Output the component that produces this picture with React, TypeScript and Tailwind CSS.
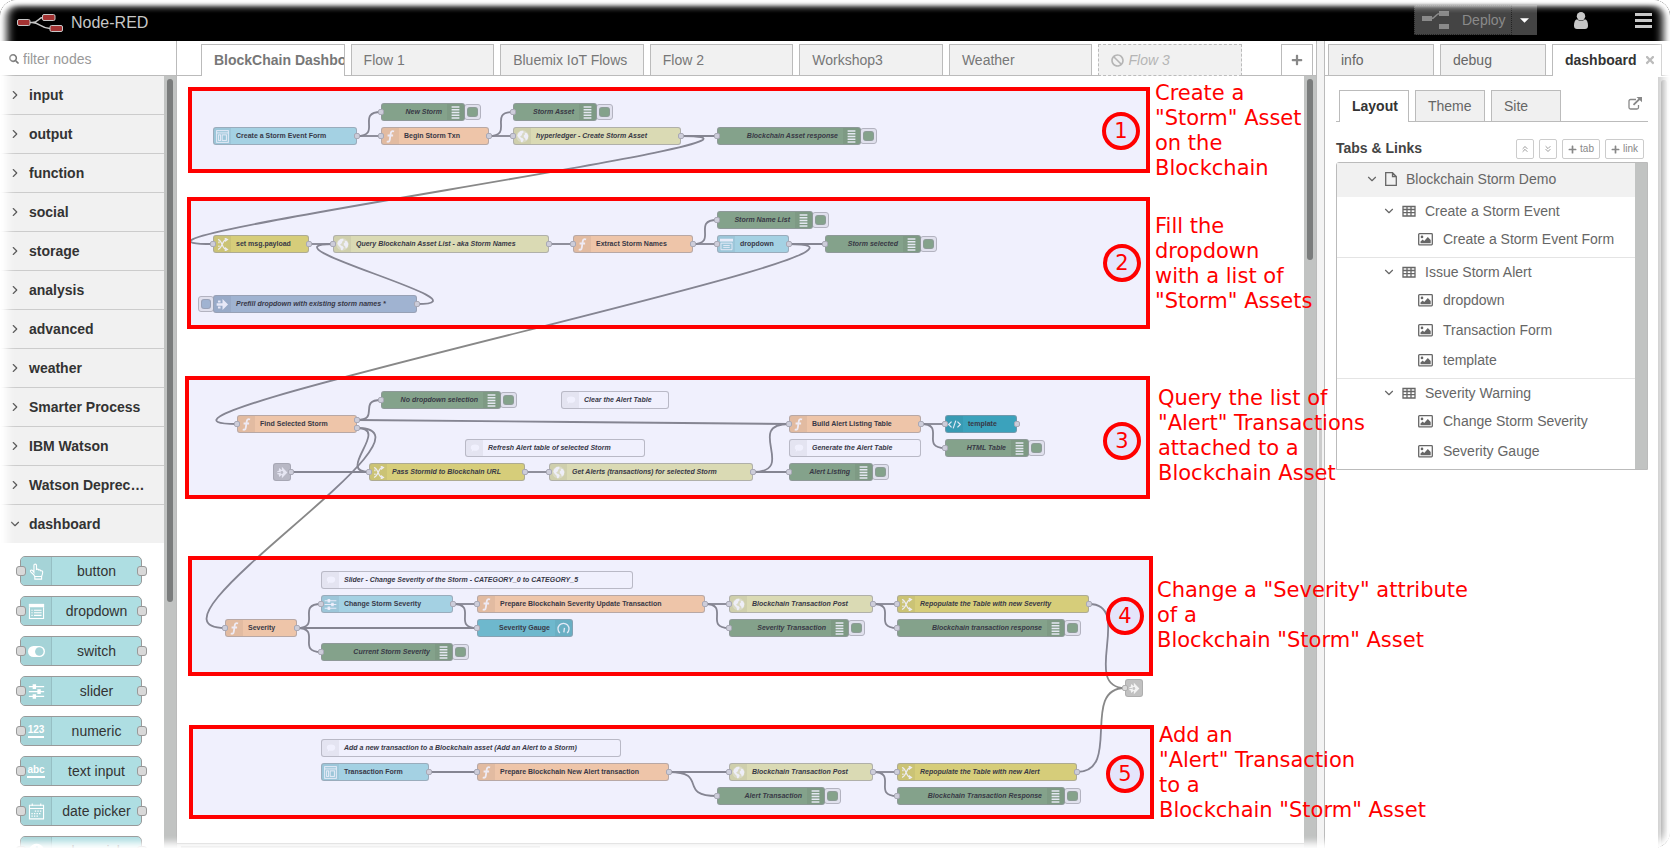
import React from "react";
import { FaBan, FaPlus, FaSearch, FaTimes } from "react-icons/fa";
import { ChevronDown, ChevronRight, ChevronsDown, ChevronsUp } from "lucide-react";

type IconName =
  | "form" | "function" | "globe" | "change" | "dropdown" | "inject" | "link" | "comment"
  | "debug" | "code" | "slider" | "gauge" | "hand" | "list" | "switch" | "numeric" | "text" | "date" | "palette";

function Glyph({ name, className }: { name: IconName; className: string }) {
  const s = { fill: "none", stroke: "currentColor", strokeWidth: 1.6 } as const;
  return (
    <svg viewBox="0 0 20 20" className={className} fill="currentColor" aria-hidden="true">
      {name === "form" && (
        <g {...s} strokeWidth={1.5}>
          <rect x="1" y="1" width="18" height="18" />
          <path d="M1 4.500h18" />
          <rect x="4" y="7.500" width="3" height="8.500" />
          <rect x="9.500" y="7.500" width="6.500" height="8.500" />
        </g>
      )}
      {name === "function" && (
        <path {...s} strokeWidth={2.8} d="M15.500 2.300c-3.200-1.300-4.800.2-5.200 3.200l-1.300 9c-.4 3.200-1.800 4.200-4.800 3.200M5.500 8.500h8.500" />
      )}
      {name === "globe" && (
        <g>
          <circle cx="10" cy="10" r="9.500" opacity=".35" />
          <path d="M3 5.500 7 1.500l4-.5 1 2.500-2 1.500-1 3-2.500 1.500 1 2 3 1 1.500 2.500-2 3.500-2 .5-1-4-3-3L2 9zM13 4l4 1 2 4-1 5-3 2-1-3.500-2-1.500v-3l2-1.500z" />
        </g>
      )}
      {name === "change" && (
        <g {...s} strokeWidth={2}>
          <path d="M3 2.500c6 0 7 15 12.500 15M3 17.500c6 0 7-15 12.500-15" />
          <path d="m13.500 0 4 2.500-4 2.700M13.500 14.800l4 2.700-4 2.500" />
          <path d="M4.500 5.500v2.500M4.500 11.500v2.500" />
        </g>
      )}
      {name === "dropdown" && (
        <g>
          <path d="M0 1h20v4.500H0z" />
          <g {...s} strokeWidth={1.4}>
            <path d="M1.500 8h17v10h-17zM5 11.500h10M5 14.500h10" />
          </g>
        </g>
      )}
      {name === "inject" && <path d="M3 4h4v3H3zM1 8h9V1.500L18.500 10 10 18.500V12H1zM3 13h4v3H3z" />}
      {name === "link" && (
        <g>
          <path d="M9 1l8.500 9L9 19V13.500L5 17l-1-4.500H2v-5h2L5 3l4 3.500z" opacity=".9" />
          <circle cx="9" cy="10" r="2.200" fill="#c5c5c5" />
          <path d="M0 9.300h6v1.400H0z" fill="#c5c5c5" />
        </g>
      )}
      {name === "comment" && (
        <path d="M10 3c5 0 8.500 2.500 8.500 6.300S15 15.500 10 15.500c-1 0-2-.1-3-.4L3 18l1.200-4C2.800 12.700 1.500 11 1.500 9.300 1.500 5.500 5 3 10 3z" />
      )}
      {name === "debug" && (
        <path d="M4 .5h12v2.200H4zM4 4.700h12v2.200H4zM4 8.900h12v2.200H4zM4 13.100h12v2.200H4zM4 17.300h12v2.200H4z" />
      )}
      {name === "code" && <path {...s} strokeWidth={1.8} d="M5.500 5.500 1 10l4.500 4.500M14.500 5.500 19 10l-4.500 4.500M12 4 8 16" />}
      {name === "slider" && (
        <g>
          <path d="M1 3.500h18v1.500H1zM1 9.300h18v1.500H1zM1 15.100h18v1.500H1z" />
          <path d="M5.500 1.500h4v5.500h-4zM11 7.300h4v5.500h-4zM5.500 13.100h4v5.500h-4z" />
        </g>
      )}
      {name === "gauge" && (
        <g {...s} strokeWidth={2}>
          <path d="M4.500 17a8.500 8.500 0 1 1 11 0" />
          <path d="M10.500 16l1-7" />
        </g>
      )}
      {name === "hand" && (
        <g {...s} strokeWidth={1.3}>
          <path d="M7 11V2.800c0-2 3-2 3 0V7.500c2-.8 2.600.2 2.700.8 1.500-.5 2.200.2 2.300.9 1.500-.4 2.300.5 2.300 1.500 0 2-.6 3.600-1.300 5.100H8C6.500 12.500 4 11.800 3 10.300c-.8-1.500 1-2.500 2.300-1.600z" />
          <path d="M8 15.800v3.200h8v-3.200" />
        </g>
      )}
      {name === "list" && (
        <g>
          <path d="M1 1h18v4H1z" />
          <path {...s} strokeWidth={1.3} d="M1.700 5v13.300h16.600V5M7 8.500h9M7 11.500h9M7 14.500h9M4 8.500h1.500M4 11.500h1.500M4 14.500h1.500" />
        </g>
      )}
      {name === "switch" && (
        <g>
          <rect x="0" y="3.500" width="20" height="13" rx="6.500" />
          <circle cx="13.300" cy="10" r="5" fill="#a5d3d7" />
        </g>
      )}
      {name === "date" && (
        <g>
          <path {...s} strokeWidth={1.3} d="M1.700 2.700h16.600v16H1.700zM1.700 6.500h16.600M5 .5v3M15 .5v3" />
          <path {...s} strokeWidth={1.6} strokeDasharray="1.600 1.400" d="M8 9.500h8M4 12.500h12M4 15.500h9" />
        </g>
      )}
      {name === "palette" && (
        <g>
          <path d="M10 1c5 0 9 3.500 9 8 0 3-2 4.500-4.500 4.500H12c-1.500 0-1.500 1.500-1 2.500.7 1.500 0 3-1.500 3C4.500 19 1 15 1 10s4-9 9-9z" />
          <circle cx="6" cy="7" r="1.500" fill="#a5d3d7" />
          <circle cx="10.500" cy="5" r="1.500" fill="#a5d3d7" />
          <circle cx="14.500" cy="8" r="1.500" fill="#a5d3d7" />
          <circle cx="5" cy="12" r="1.500" fill="#a5d3d7" />
        </g>
      )}
    </svg>
  );
}

const CATEGORIES = [
  "input", "output", "function", "social", "storage", "analysis",
  "advanced", "weather", "Smarter Process", "IBM Watson", "Watson Deprec…",
];

const PALETTE: { label: string; icon: IconName }[] = [
  { label: "button", icon: "hand" },
  { label: "dropdown", icon: "list" },
  { label: "switch", icon: "switch" },
  { label: "slider", icon: "slider" },
  { label: "numeric", icon: "numeric" },
  { label: "text input", icon: "text" },
  { label: "date picker", icon: "date" },
  { label: "colour picker", icon: "palette" },
];

const KINDS = {
  ui: "bg-[#abdde3]",
  function: "bg-[#fdd0a2]",
  http: "bg-[#e7e7ae]",
  change: "bg-[#e2d96e]",
  debug: "bg-[#87a980]",
  inject: "bg-[#a6bbcf]",
  template: "bg-[#36a9b7]",
  gauge: "bg-[#6fc1ca]",
  comment: "bg-white",
  link: "bg-[#cccccc]",
};

type FlowNode = {
  id: string;
  kind: keyof typeof KINDS;
  icon: IconName;
  label: string;
  x: number;
  y: number;
  w: number;
  italic?: boolean;
  input?: boolean;
  outputs?: number;
};

/* x is the left edge and y the vertical centre of a node, on a 12px grid */
const NODES: FlowNode[] = [
  { id: "form1", kind: "ui", icon: "form", label: "Create a Storm Event Form", x: 36, y: 60, w: 144, outputs: 1 },
  { id: "newStorm", kind: "debug", icon: "debug", label: "New Storm", x: 204, y: 36, w: 84, input: true },
  { id: "begin", kind: "function", icon: "function", label: "Begin Storm Txn", x: 204, y: 60, w: 108, input: true, outputs: 1 },
  { id: "stormAsset", kind: "debug", icon: "debug", label: "Storm Asset", x: 336, y: 36, w: 84, input: true },
  { id: "hyper", kind: "http", icon: "globe", label: "hyperledger - Create Storm Asset", x: 336, y: 60, w: 168, italic: true, input: true, outputs: 1 },
  { id: "assetResp", kind: "debug", icon: "debug", label: "Blockchain Asset response", x: 540, y: 60, w: 144, input: true },
  { id: "setMsg", kind: "change", icon: "change", label: "set msg.payload", x: 36, y: 168, w: 96, input: true, outputs: 1 },
  { id: "query", kind: "http", icon: "globe", label: "Query Blockchain Asset List - aka Storm Names", x: 156, y: 168, w: 216, italic: true, input: true, outputs: 1 },
  { id: "extract", kind: "function", icon: "function", label: "Extract Storm Names", x: 396, y: 168, w: 120, input: true, outputs: 1 },
  { id: "dropdown", kind: "ui", icon: "dropdown", label: "dropdown", x: 540, y: 168, w: 72, input: true, outputs: 1 },
  { id: "nameList", kind: "debug", icon: "debug", label: "Storm Name List", x: 540, y: 144, w: 96, input: true },
  { id: "selected", kind: "debug", icon: "debug", label: "Storm selected", x: 648, y: 168, w: 96, input: true },
  { id: "prefill", kind: "inject", icon: "inject", label: "Prefill dropdown with existing storm names *", x: 36, y: 228, w: 204, italic: true, outputs: 1 },
  { id: "find", kind: "function", icon: "function", label: "Find Selected Storm", x: 60, y: 348, w: 120, input: true, outputs: 2 },
  { id: "noDrop", kind: "debug", icon: "debug", label: "No dropdown selection", x: 204, y: 324, w: 120, input: true },
  { id: "c1", kind: "comment", icon: "comment", label: "Clear the Alert Table", x: 384, y: 324, w: 108, italic: true },
  { id: "c2", kind: "comment", icon: "comment", label: "Refresh Alert table of selected Storm", x: 288, y: 372, w: 180, italic: true },
  { id: "linkIn", kind: "link", icon: "link", label: "", x: 96, y: 396, w: 18, outputs: 1 },
  { id: "pass", kind: "change", icon: "change", label: "Pass StormId to Blockchain URL", x: 192, y: 396, w: 156, italic: true, input: true, outputs: 1 },
  { id: "getAlerts", kind: "http", icon: "globe", label: "Get Alerts (transactions) for selected Storm", x: 372, y: 396, w: 204, italic: true, input: true, outputs: 1 },
  { id: "build", kind: "function", icon: "function", label: "Build Alert Listing Table", x: 612, y: 348, w: 132, input: true, outputs: 1 },
  { id: "c3", kind: "comment", icon: "comment", label: "Generate the Alert Table", x: 612, y: 372, w: 132, italic: true },
  { id: "listing", kind: "debug", icon: "debug", label: "Alert Listing", x: 612, y: 396, w: 84, input: true },
  { id: "template", kind: "template", icon: "code", label: "template", x: 768, y: 348, w: 72, input: true, outputs: 1 },
  { id: "html", kind: "debug", icon: "debug", label: "HTML Table", x: 768, y: 372, w: 84, input: true },
  { id: "severity", kind: "function", icon: "function", label: "Severity", x: 48, y: 552, w: 72, input: true, outputs: 1 },
  { id: "c4", kind: "comment", icon: "comment", label: "Slider - Change Severity of the Storm - CATEGORY_0 to CATEGORY_5", x: 144, y: 504, w: 312, italic: true },
  { id: "changeSev", kind: "ui", icon: "slider", label: "Change Storm Severity", x: 144, y: 528, w: 132, input: true, outputs: 1 },
  { id: "curSev", kind: "debug", icon: "debug", label: "Current Storm Severity", x: 144, y: 576, w: 132, input: true },
  { id: "prepSev", kind: "function", icon: "function", label: "Prepare Blockchain Severity Update Transaction", x: 300, y: 528, w: 228, input: true, outputs: 1 },
  { id: "gauge", kind: "gauge", icon: "gauge", label: "Severity Gauge", x: 300, y: 552, w: 96, input: true },
  { id: "post1", kind: "http", icon: "globe", label: "Blockchain Transaction Post", x: 552, y: 528, w: 144, italic: true, input: true, outputs: 1 },
  { id: "sevTx", kind: "debug", icon: "debug", label: "Severity Transaction", x: 552, y: 552, w: 120, input: true },
  { id: "repop1", kind: "change", icon: "change", label: "Repopulate the Table with new Severity", x: 720, y: 528, w: 192, italic: true, input: true, outputs: 1 },
  { id: "txResp1", kind: "debug", icon: "debug", label: "Blockchain transaction response", x: 720, y: 552, w: 168, input: true },
  { id: "linkOut", kind: "link", icon: "link", label: "", x: 948, y: 612, w: 18, input: true },
  { id: "c5", kind: "comment", icon: "comment", label: "Add a new transaction to a Blockchain asset (Add an Alert to a Storm)", x: 144, y: 672, w: 300, italic: true },
  { id: "form2", kind: "ui", icon: "form", label: "Transaction Form", x: 144, y: 696, w: 108, outputs: 1 },
  { id: "prepAlert", kind: "function", icon: "function", label: "Prepare Blockchain New Alert transaction", x: 300, y: 696, w: 192, input: true, outputs: 1 },
  { id: "post2", kind: "http", icon: "globe", label: "Blockchain Transaction Post", x: 552, y: 696, w: 144, italic: true, input: true, outputs: 1 },
  { id: "alertTx", kind: "debug", icon: "debug", label: "Alert Transaction", x: 540, y: 720, w: 108, input: true },
  { id: "repop2", kind: "change", icon: "change", label: "Repopulate the Table with new Alert", x: 720, y: 696, w: 180, italic: true, input: true, outputs: 1 },
  { id: "txResp2", kind: "debug", icon: "debug", label: "Blockchain Transaction Response", x: 720, y: 720, w: 168, input: true },
];

const LINKS: [string, string, number?][] = [
  ["form1", "newStorm"], ["form1", "begin"], ["begin", "stormAsset"], ["begin", "hyper"],
  ["hyper", "assetResp"], ["hyper", "setMsg"], ["setMsg", "query"], ["prefill", "query"],
  ["query", "extract"], ["extract", "nameList"], ["extract", "dropdown"], ["dropdown", "selected"],
  ["dropdown", "find"], ["find", "noDrop"], ["find", "build"], ["find", "pass", 1],
  ["find", "severity", 1], ["linkIn", "pass"], ["pass", "getAlerts"], ["getAlerts", "build"],
  ["getAlerts", "listing"], ["build", "template"], ["build", "html"], ["severity", "changeSev"],
  ["severity", "gauge"], ["severity", "curSev"], ["changeSev", "prepSev"], ["changeSev", "gauge"],
  ["prepSev", "post1"], ["prepSev", "sevTx"], ["post1", "repop1"], ["post1", "txResp1"],
  ["repop1", "linkOut"], ["form2", "prepAlert"], ["prepAlert", "post2"], ["prepAlert", "alertTx"],
  ["post2", "repop2"], ["post2", "txResp2"], ["repop2", "linkOut"],
];

function portOffset(outputs: number, index: number) {
  return outputs === 1 ? 0 : index * 8 - 4;
}

function wirePath([from, to, port = 0]: [string, string, number?]) {
  const a = NODES.find((n) => n.id === from)!;
  const b = NODES.find((n) => n.id === to)!;
  const x1 = a.x + a.w;
  const y1 = a.y + portOffset(a.outputs ?? 1, port);
  const x2 = b.x;
  const y2 = b.y;
  const dx = x2 - x1;
  const dy = y2 - y1;
  const unit = 60;
  const high = 18;
  const delta = Math.hypot(dx, dy);
  let scale = delta < unit ? 0.75 - 0.75 * ((unit - delta) / unit) : 0.75;
  let scaleY = 0;
  if (dx < 0) {
    scale += 2 * (Math.min(5 * unit, Math.abs(dx)) / (5 * unit));
    if (Math.abs(dy) < 3 * high) {
      scaleY = (dy > 0 ? 0.5 : -0.5) * ((3 * high - Math.abs(dy)) / (3 * high)) * (Math.min(unit, Math.abs(dx)) / unit);
    }
  }
  return `M${x1} ${y1}C${x1 + scale * unit} ${y1 + scaleY * high} ${x2 - scale * unit} ${y2 - scaleY * high} ${x2} ${y2}`;
}

function Port({ x, y }: { x: number; y: number }) {
  return (
    <span
      className="absolute size-[6px] rounded-[2px] border border-[#b0b0b0] bg-[#d9d9d9]"
      style={{ left: x - 3, top: y - 3 }}
    />
  );
}

function CanvasNode({ node }: { node: FlowNode }) {
  const right = node.kind === "debug" || node.kind === "gauge";
  const italic = node.italic || node.kind === "debug";
  const outputs = node.outputs ?? 0;
  const iconTone = node.kind === "comment" ? "text-white bg-black/5" : "text-white/90 bg-black/5";
  return (
    <div className="absolute h-[18px]" style={{ left: node.x, top: node.y - 9, width: node.w }}>
      {node.kind === "inject" && (
        <button aria-label={`Inject ${node.label}`} className="absolute top-[1px] -left-[15px] h-4 w-4 rounded-[3px] border border-[#bbb] bg-[#eee] p-[2px]">
          <span className="block h-full w-full rounded-[3px] border border-[#999]/50 bg-[#a6bbcf]" />
        </button>
      )}
      {node.kind === "debug" && (
        <button aria-label={`Toggle ${node.label}`} className="absolute top-[1px] -right-4 h-4 w-[17px] rounded-[3px] border border-[#bbb] bg-[#eee] p-[2px]">
          <span className="block h-full w-full rounded-[3px] border border-[#999]/50 bg-[#87a980]" />
        </button>
      )}
      <div
        className={`relative flex h-full items-center overflow-hidden rounded-[3px] border border-[#999]/60 ${KINDS[node.kind]} ${right ? "flex-row-reverse" : ""}`}
      >
        <span className={`flex h-full w-[17px] shrink-0 items-center justify-center ${iconTone}`}>
          <Glyph name={node.icon} className={node.kind === "comment" ? "size-[10px]" : "size-[13px]"} />
        </span>
        {node.label && (
          <span
            className={`min-w-0 flex-1 px-[5px] text-[7px] leading-4 font-bold whitespace-nowrap text-[#333] ${italic ? "italic" : ""} ${right ? "text-right" : ""}`}
          >
            {node.label}
          </span>
        )}
      </div>
      {node.input && <Port x={0} y={9} />}
      {Array.from({ length: outputs }, (_, i) => (
        <Port key={i} x={node.w} y={9 + portOffset(outputs, i)} />
      ))}
    </div>
  );
}

const NOTES = [
  { n: 1, box: [11, 11, 962, 86], dot: [925, 36], text: [978, 5], lines: ["Create a", "\"Storm\" Asset", "on the", "Blockchain"] },
  { n: 2, box: [10, 121, 963, 132], dot: [926, 168], text: [978, 138], lines: ["Fill the", "dropdown", "with a list of", "\"Storm\" Assets"] },
  { n: 3, box: [8, 300, 965, 123], dot: [926, 346], text: [981, 310], lines: ["Query the list of", "\"Alert\" Transactions", "attached to a", "Blockchain Asset"] },
  { n: 4, box: [11, 480, 965, 120], dot: [929, 521], text: [980, 502], lines: ["Change a \"Severity\" attribute", "of a", "Blockchain \"Storm\" Asset"] },
  { n: 5, box: [12, 649, 965, 94], dot: [929, 679], text: [982, 647], lines: ["Add an", "\"Alert\" Transaction", "to a", "Blockchain \"Storm\" Asset"] },
];

function Annotations() {
  return (
    <div className="pointer-events-none absolute inset-0 z-20 font-['DejaVu_Sans',sans-serif] text-[21px] leading-[25px] text-[#ff0000]">
      {NOTES.map((note) => (
        <React.Fragment key={note.n}>
          <div
            className="absolute border-4 border-[#ff0000] bg-[rgb(105,105,235)]/10"
            style={{ left: note.box[0], top: note.box[1], width: note.box[2], height: note.box[3] }}
          />
          <div
            className="absolute flex size-[38px] items-center justify-center rounded-full border-4 border-[#ff0000] bg-[#e5e5fb]"
            style={{ left: note.dot[0], top: note.dot[1] }}
          >
            {note.n}
          </div>
          <p className="absolute whitespace-nowrap" style={{ left: note.text[0], top: note.text[1] }}>
            {note.lines.map((line) => (
              <span key={line} className="block">{line}</span>
            ))}
          </p>
        </React.Fragment>
      ))}
    </div>
  );
}

function Header() {
  return (
    <header className="flex h-[41px] shrink-0 items-center bg-black pt-[5px] pr-[18px] pl-[17px]">
      <svg viewBox="0 0 46 18" className="h-[18px] w-[46px]" aria-hidden="true">
        <path d="M13 8.500h2c7 0 6-5 11-5M15 8.500c8 0 9 6 18 6" fill="none" stroke="#c7c7c7" strokeWidth="1.500" />
        <g fill="#a33333" stroke="#c7c7c7" strokeWidth="1">
          <rect x=".5" y="5.500" width="12.500" height="6" rx="1.500" />
          <rect x="25.500" y=".5" width="12.500" height="6" rx="1.500" />
          <rect x="33" y="11.500" width="12.500" height="6" rx="1.500" />
        </g>
      </svg>
      <h1 className="ml-2 text-base text-[#c7c7c7]">Node-RED</h1>
      <div className="ml-auto flex h-[30px] self-start bg-[#444]">
        <button className="flex w-[98px] items-center border border-dotted border-[#222] pl-[7px] text-sm text-[#8a8a8a]">
          <svg viewBox="0 0 28 18" className="mr-3 h-[18px] w-[28px]" aria-hidden="true">
            <path d="M9 7.500c5 0 4-5 9-5" fill="none" stroke="#8a8a8a" strokeWidth="1.500" />
            <path d="M0 5h10v5H0zM17 0h10v5H17zM17 13h10v5H17z" fill="#8a8a8a" />
          </svg>
          Deploy
        </button>
        <button aria-label="Deploy options" className="flex w-[25px] items-center justify-center">
          <svg viewBox="0 0 10 5" className="h-[5px] w-[9px]"><path d="M0 0h10L5 5z" fill="#fff" /></svg>
        </button>
      </div>
      <button aria-label="User" className="ml-[37px] pb-[6px]">
        <svg viewBox="0 0 14 17" className="h-[17px] w-[14px]" fill="#c7c7c7">
          <circle cx="7" cy="4.300" r="4.200" />
          <path d="M3 7.300C.8 8 0 10.500 0 13.800 0 16 1.200 17 3 17h8c1.800 0 3-1 3-3.200 0-3.300-.8-5.800-3-6.500A5.600 5.600 0 0 1 3 7.300z" />
        </svg>
      </button>
      <button aria-label="Main menu" className="ml-[47px] flex w-[17px] flex-col gap-[3px] pb-[6px]">
        <span className="h-[3px] bg-[#c7c7c7]" />
        <span className="h-[3px] bg-[#c7c7c7]" />
        <span className="h-[3px] bg-[#c7c7c7]" />
      </button>
    </header>
  );
}

function PaletteIcon({ name }: { name: IconName }) {
  if (name === "numeric" || name === "text") {
    return (
      <span className="border-b-2 border-white text-[10px] leading-3 font-bold text-white">
        {name === "numeric" ? "123" : "abc"}
      </span>
    );
  }
  return <Glyph name={name} className="size-[17px] text-white" />;
}

function Palette() {
  return (
    <aside className="flex w-[177px] shrink-0 flex-col border-r border-[#bbb]">
      <label className="flex h-[35px] shrink-0 items-center border-b border-[#bbb] pt-[2px] pl-[9px]">
        <FaSearch className="size-[10px] text-[#777]" />
        <input aria-label="filter nodes" placeholder="filter nodes" className="ml-1 w-[140px] bg-transparent text-sm outline-none placeholder:text-[#999]" />
      </label>
      <div className="flex min-h-0 flex-1">
        <div className="min-w-0 flex-1 overflow-hidden">
          {CATEGORIES.map((name) => (
            <button key={name} className="flex h-[39px] w-full items-center border-b border-[#ccc] bg-[#f1f1f1] text-left text-sm font-bold text-[#333]">
              <ChevronRight className="mr-[7px] ml-[8px] size-[14px] text-[#555]" />
              {name}
            </button>
          ))}
          <button className="flex h-[38px] w-full items-center bg-[#f1f1f1] text-left text-sm font-bold text-[#333]">
            <ChevronDown className="mr-[7px] ml-[8px] size-[14px] text-[#555]" />
            dashboard
          </button>
          <ul className="flex flex-col gap-[10px] pt-[13px] pl-5">
            {PALETTE.map((item) => (
              <li key={item.label} className="relative flex h-[30px] w-[122px] shrink-0 rounded-[5px] border border-[#999] bg-[#aedee2]">
                <span className="flex w-[31px] items-center justify-center rounded-l-[4px] border-r border-[#96bfc4] bg-[#a5d3d7]">
                  <PaletteIcon name={item.icon} />
                </span>
                <span className="flex-1 text-center text-sm leading-[29px] text-[#333]">{item.label}</span>
                <span className="absolute top-[9px] -left-[5px] size-[10px] rounded-[3px] border border-[#999] bg-[#d9d9d9]" />
                <span className="absolute top-[9px] -right-[6px] size-[10px] rounded-[3px] border border-[#999] bg-[#d9d9d9]" />
              </li>
            ))}
          </ul>
        </div>
        <div className="w-3 bg-[#c1c3c2] px-[3px] pt-[3px]">
          <div className="h-[68%] rounded-full bg-[#7a7c7c]" />
        </div>
      </div>
    </aside>
  );
}

const TABS = ["Flow 1", "Bluemix IoT Flows", "Flow 2", "Workshop3", "Weather"];

function Workspace() {
  return (
    <main className="flex min-w-0 flex-1 flex-col border-r border-[#bbb]">
      <nav className="flex h-[35px] shrink-0 items-end">
        <span className="h-full w-6 border-b border-[#bbb]" />
        <div className="flex h-[32px] min-w-0 flex-1 text-sm text-[#777]">
          <a href="#dashboard" className="min-w-0 flex-1 overflow-hidden border border-b-0 border-[#bbb] bg-white pl-[12px] leading-[31px] font-bold whitespace-nowrap">
            BlockChain Dashboard
          </a>
          {TABS.map((tab) => (
            <React.Fragment key={tab}>
              <span className="w-[6px] border-b border-[#bbb]" />
              <a href="#flow" className="min-w-0 flex-1 overflow-hidden border border-[#bbb] bg-[#f1f1f1] pl-[12px] leading-[31px] whitespace-nowrap">
                {tab}
              </a>
            </React.Fragment>
          ))}
          <span className="w-[6px] border-b border-[#bbb]" />
          <a href="#flow3" className="flex min-w-0 flex-1 items-center gap-1 border border-dashed border-[#bbb] bg-[#f1f1f1] pl-[12px] text-[#b5b5b5] italic">
            <FaBan className="size-[13px]" />
            Flow 3
          </a>
        </div>
        <span className="h-full w-[39px] border-b border-[#bbb]" />
        <button aria-label="Add flow" className="flex h-[32px] w-8 items-center justify-center border border-[#bbb] bg-white text-[#888]">
          <FaPlus className="size-3" />
        </button>
        <span className="h-full w-[3px] border-b border-[#bbb]" />
      </nav>
      <div className="relative flex min-h-0 flex-1">
        <div className="flex min-w-0 flex-1 flex-col">
          <div className="relative min-h-0 flex-1 overflow-hidden bg-white">
            <svg className="absolute inset-0 h-full w-full" fill="none" stroke="#888" strokeWidth="1.800" aria-hidden="true">
              {LINKS.map((link, i) => (
                <path key={i} d={wirePath(link)} />
              ))}
            </svg>
            {NODES.map((node) => (
              <CanvasNode key={node.id} node={node} />
            ))}
          </div>
          <div className="h-[5px] shrink-0 border-t border-[#bbb] bg-[#ddd] pt-[2px] pl-1">
            <div className="h-full w-[32%] bg-[#999]" />
          </div>
        </div>
        <div className="w-3 bg-[#c1c3c2] px-[3px] pt-[3px]">
          <div className="h-[181px] rounded-full bg-[#7a7c7c]" />
        </div>
        <Annotations />
      </div>
    </main>
  );
}

function PictureIcon() {
  return (
    <svg viewBox="0 0 15 13" className="h-[13px] w-[15px]" aria-hidden="true">
      <rect x=".7" y=".7" width="13.600" height="11.200" rx=".8" fill="none" stroke="#666" strokeWidth="1.300" />
      <circle cx="4" cy="3.900" r="1.300" fill="#666" />
      <path d="M2.500 10.300V8.500l2.200-2 1.500 1.400 3.600-4 2.900 3v3.400z" fill="#666" />
    </svg>
  );
}

function GridIcon() {
  return (
    <svg viewBox="0 0 14 12" className="h-3 w-[14px]" aria-hidden="true">
      <path d="M1 1.500h12v9.500H1zM1 4.500h12M1 7.700h12M5 1.500V11M9 1.500V11M1 1.500h12" fill="none" stroke="#666" strokeWidth="1.300" />
    </svg>
  );
}

const GROUPS = [
  { name: "Create a Storm Event", items: ["Create a Storm Event Form"] },
  { name: "Issue Storm Alert", items: ["dropdown", "Transaction Form", "template"] },
  { name: "Severity Warning", items: ["Change Storm Severity", "Severity Gauge"] },
];

function Sidebar() {
  const small = "flex h-5 items-center justify-center rounded-[2px] border border-[#ccc] bg-white text-[#888]";
  const idle = "border border-[#bbb] bg-[#f0f0f0] leading-[31px]";
  return (
    <aside className="flex w-[346px] shrink-0 flex-col border-l border-[#bbb] bg-white text-sm text-[#666]">
      <nav className="flex h-[35px] shrink-0 items-end">
        <span className="h-full w-[3px] border-b border-[#bbb]" />
        <a href="#info" className={`h-[32px] w-[106px] pl-[12px] ${idle}`}>info</a>
        <span className="h-full w-[6px] border-b border-[#bbb]" />
        <a href="#debug" className={`h-[32px] w-[106px] pl-[12px] ${idle}`}>debug</a>
        <span className="h-full w-[6px] border-b border-[#bbb]" />
        <a href="#dash" className="flex h-[32px] w-[110px] items-center gap-[7px] border border-b-0 border-[#bbb] pb-px pl-[12px] font-bold text-[#333]">
          dashboard
          <FaTimes className="size-3 shrink-0 text-[#bbb]" />
        </a>
        <span className="h-full flex-1 border-b border-[#bbb]" />
      </nav>
      <div className="flex min-h-0 flex-1">
        <div className="min-w-0 flex-1 pr-[10px] pl-[11px]">
          <nav className="flex h-[46px] items-end">
            <span className="h-px w-[3px] bg-[#bbb]" />
            <a href="#layout" className="h-[32px] w-[70px] border border-b-0 border-[#bbb] pl-[12px] leading-[31px] font-bold text-[#333]">Layout</a>
            <span className="h-px w-[6px] bg-[#bbb]" />
            <a href="#theme" className={`h-[32px] w-[70px] pl-[12px] ${idle}`}>Theme</a>
            <span className="h-px w-[6px] bg-[#bbb]" />
            <a href="#site" className={`h-[32px] w-[70px] pl-[12px] ${idle}`}>Site</a>
            <span className="flex h-[32px] flex-1 justify-end border-b border-[#bbb] pt-[7px] pr-[6px]">
              <button aria-label="Open dashboard" className="flex size-[14px]">
                <svg viewBox="0 0 14 13" className="h-[13px] w-[14px]" fill="none" stroke="#888" strokeWidth="1.300">
                  <path d="M8 2.500H2.500A1.500 1.500 0 0 0 1 4v6.500A1.500 1.500 0 0 0 2.500 12H9a1.500 1.500 0 0 0 1.500-1.500V8" />
                  <path d="M5.500 7.800 12 1.500" strokeWidth="1.800" />
                  <path d="M8.500 0H14v5.300z" fill="#888" stroke="none" />
                </svg>
              </button>
            </span>
          </nav>
          <div className="flex h-[40px] items-start gap-[5px] pt-[17px] pr-1">
            <h2 className="-mt-px flex-1 font-bold text-[#444]">Tabs &amp; Links</h2>
            <button aria-label="Collapse all" className={`w-[18px] ${small}`}><ChevronsUp className="size-[10px]" /></button>
            <button aria-label="Expand all" className={`w-[18px] ${small}`}><ChevronsDown className="size-[10px]" /></button>
            <button className={`w-[38px] gap-[3px] text-[10px] ${small}`}><FaPlus className="size-[9px]" />tab</button>
            <button className={`w-[39px] gap-[3px] text-[10px] ${small}`}><FaPlus className="size-[9px]" />link</button>
          </div>
          <div className="flex rounded-tl-[3px] border border-[#bbb]">
            <div className="min-w-0 flex-1">
              <div className="flex h-[34px] items-center bg-[#f1f1f1] pb-[3px] pl-[28px]">
                <ChevronDown className="size-[14px]" />
                <svg viewBox="0 0 12 14" className="mr-[9px] ml-[6px] h-[14px] w-3" fill="none" stroke="#666" strokeWidth="1.300" aria-hidden="true">
                  <path d="M.7.7h6.800l3.800 3.800v8.800H.7zM7.500.7v3.800h3.800" />
                </svg>
                Blockchain Storm Demo
              </div>
              {GROUPS.map((group, i) => (
                <section key={group.name} className={`pb-[3px] ${i ? "border-t border-[#e4e4e4]" : ""}`}>
                  <h3 className="flex h-[27px] items-center pl-[45px]">
                    <ChevronDown className="mr-[6px] size-[14px]" />
                    <GridIcon />
                    <span className="ml-[9px]">{group.name}</span>
                  </h3>
                  {group.items.map((item) => (
                    <div key={item} className="flex h-[30px] items-center gap-[10px] pl-[81px]">
                      <PictureIcon />
                      {item}
                    </div>
                  ))}
                </section>
              ))}
            </div>
            <div className="w-3 bg-[#c1c3c2]" />
          </div>
        </div>
        <div className="mt-px w-3 bg-[#ccc] pt-[3px] pl-[3px]">
          <div className="h-full w-[6px] rounded-t-full bg-[#999]" />
        </div>
      </div>
    </aside>
  );
}

export default function App() {
  return (
    <div className="relative flex h-screen flex-col overflow-hidden rounded-[16px] bg-white font-['Liberation_Sans',Arial,sans-serif]">
      <Header />
      <div className="flex min-h-0 flex-1 bg-white">
        <Palette />
        <Workspace />
        <div className="flex w-[7px] shrink-0 items-center justify-center bg-[#f3f3f3]">
          <div className="h-[50px] w-[3px] bg-[#ccc]" />
        </div>
        <Sidebar />
      </div>
      <div className="pointer-events-none absolute inset-0 z-30 rounded-[16px] shadow-[inset_4px_0_10px_3px_#fff,inset_-4px_0_10px_3px_#fff,inset_0_4px_4px_0_#fff]" />
    </div>
  );
}
